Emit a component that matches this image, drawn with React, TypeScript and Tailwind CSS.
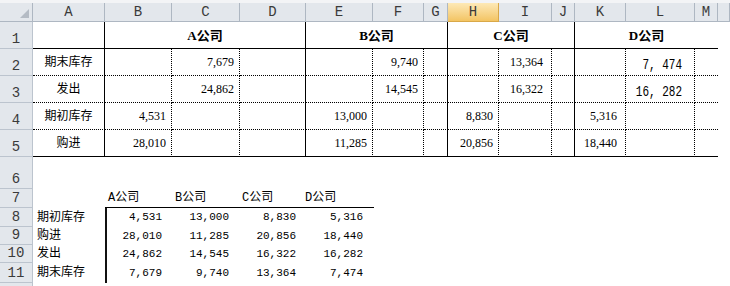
import React from 'react';

// column widths: row header, A..M, then the cut-off N
const GRID = "grid grid-cols-[33px_72px_67px_68px_66px_67px_51px_24px_51px_53px_23px_51px_69px_23px_1fr]";

const letters = ["A", "B", "C", "D", "E", "F", "G", "H", "I", "J", "K", "L", "M", ""];

// right border of each column A..M in rows 2-5
const rightBorder = [
  "border-r border-black",
  "border-r border-black [border-right-style:dotted]",
  "border-r border-black [border-right-style:dotted]",
  "border-r border-black",
  "border-r border-black [border-right-style:dotted]",
  "border-r border-black [border-right-style:dotted]",
  "border-r border-black",
  "border-r border-black [border-right-style:dotted]",
  "border-r border-black [border-right-style:dotted]",
  "border-r border-black",
  "border-r border-black [border-right-style:dotted]",
  "border-r border-black [border-right-style:dotted]",
  "",
];

const rows: { n: number; label: string; vals: Record<number, string>; big?: string }[] = [
  { n: 2, label: "期末库存", vals: { 2: "7,679", 5: "9,740", 8: "13,364" }, big: "7, 474" },
  { n: 3, label: "发出", vals: { 2: "24,862", 5: "14,545", 8: "16,322" }, big: "16, 282" },
  { n: 4, label: "期初库存", vals: { 1: "4,531", 4: "13,000", 7: "8,830", 10: "5,316" } },
  { n: 5, label: "购进", vals: { 1: "28,010", 4: "11,285", 7: "20,856", 10: "18,440" } },
];

const companies = ["A公司", "B公司", "C公司", "D公司"];

const summary = [
  { label: "期初库存", vals: ["4,531", "13,000", "8,830", "5,316"], h: "h-[19px]" },
  { label: "购进", vals: ["28,010", "11,285", "20,856", "18,440"], h: "h-[18px]" },
  { label: "发出", vals: ["24,862", "14,545", "16,322", "16,282"], h: "h-[18px]" },
  { label: "期末库存", vals: ["7,679", "9,740", "13,364", "7,474"], h: "h-[20px]" },
];

const lowerHeaders = [
  { n: "6", h: "h-[32px]" },
  { n: "7", h: "h-[19px]" },
  { n: "8", h: "h-[19px]" },
  { n: "9", h: "h-[18px]" },
  { n: "10", h: "h-[18px]" },
  { n: "11", h: "h-[20px]" },
  { n: "", h: "h-[20px]" },
];

const rowHead = "bg-[#e3e7ec] border-r border-b border-[#bcc4ce] flex items-end justify-center pb-[2px] text-[14px] leading-none text-[#3a3a3a] font-['Liberation_Mono',monospace]";
const serif = "font-['Liberation_Serif','Noto_Sans_CJK_SC',serif] text-[12px] leading-none text-black";
const cjk = "font-['Liberation_Sans','Noto_Sans_CJK_SC',sans-serif] text-[12px] leading-none text-black";

export default function App() {
  return (
    <div className="w-[730px] h-[286px] overflow-hidden bg-white">
      <div className="h-[3px] bg-[#f3f4f6]" />

      {/* 欄標題 */}
      <div className={`${GRID} h-[19px]`}>
        <div className="bg-[#e3e7ec] border-r border-b border-[#aeb7c2]">
          <svg width="33" height="18" className="block">
            <polygon points="29,6 29,15 20,15" fill="#b4bbc4" />
          </svg>
        </div>
        {letters.map((l) => (
          <div
            key={l || "n"}
            className={`${l === "H" ? "bg-linear-to-b from-[#fde9b6] to-[#f3c462] border-[#d9a848]" : "bg-[#e3e7ec] border-[#aeb7c2]"} border-r border-b flex items-center justify-center text-[14px] leading-none text-[#3a3a3a] font-['Liberation_Mono',monospace]`}
          >
            {l}
          </div>
        ))}
      </div>

      {/* 第1列：公司標題 */}
      <div className={`${GRID} h-[27px]`}>
        <div className={rowHead}>1</div>
        <div className="border-r border-b border-black" />
        {companies.map((c, i) => (
          <div
            key={c}
            className={`col-span-3 border-b border-black ${i < 3 ? "border-r" : ""} flex items-center justify-center font-['Liberation_Serif','Noto_Sans_CJK_SC',serif] text-[13px] font-bold leading-none text-black`}
          >
            {c}
          </div>
        ))}
        <div />
      </div>

      {/* 第2-5列 */}
      {rows.map((r) => (
        <div key={r.n} className={`${GRID} h-[27px]`}>
          <div className={rowHead}>{r.n}</div>
          {letters.slice(0, 13).map((_, c) => {
            const bottom = r.n === 5 ? "border-b border-black" : "border-b border-black [border-bottom-style:dotted]";
            if (c === 0) {
              return (
                <div key={c} className={`${rightBorder[c]} ${bottom} flex items-center justify-center ${cjk}`}>
                  {r.label}
                </div>
              );
            }
            if (c === 11 && r.big) {
              return (
                <div key={c} className={`${rightBorder[c]} ${bottom} flex items-end justify-end pr-[12px] pb-[2px]`}>
                  <span className="inline-block origin-bottom scale-y-[1.35] font-['Liberation_Mono',monospace] text-[11px] leading-none text-black">
                    {r.big}
                  </span>
                </div>
              );
            }
            const pad = c === 8 || c === 10 ? "pr-[8px]" : "pr-[5px]";
            return (
              <div key={c} className={`${rightBorder[c]} ${bottom} flex items-center justify-end ${pad} ${serif}`}>
                {r.vals[c] ?? ""}
              </div>
            );
          })}
          <div />
        </div>
      ))}

      {/* 第6列以下：貼上的彙總表 */}
      <div className="flex">
        <div className="w-[33px] shrink-0 flex flex-col">
          {lowerHeaders.map((h, i) => (
            <div key={i} className={`${h.h} ${rowHead}`}>
              {h.n}
            </div>
          ))}
        </div>
        <div className="flex-1 pt-[32px] flex font-['Liberation_Mono','Noto_Sans_CJK_SC',monospace] text-black leading-none">
          <div className="w-[74px] shrink-0 flex flex-col">
            <div className="h-[19px]" />
            {summary.map((s) => (
              <div key={s.label} className={`${s.h} flex items-center pl-[4px] text-[12px] border-r-2 border-[#111]`}>
                {s.label}
              </div>
            ))}
          </div>
          <div className="w-[267px] shrink-0 flex flex-col">
            <div className="h-[19px] -ml-[2px] grid grid-cols-[68px_67px_67px_67px] border-b border-black">
              {companies.map((c, i) => (
                <div key={c} className={`flex items-center text-[12px] ${i === 3 ? "-ml-[2px]" : i === 0 ? "pl-[3px]" : "pl-[2px]"}`}>
                  {c}
                </div>
              ))}
            </div>
            <div className="flex flex-col">
              {summary.map((s) => (
                <div key={s.label} className={`${s.h} grid grid-cols-[66px_67px_67px_67px]`}>
                  {s.vals.map((v, i) => (
                    <div key={i} className="flex items-center justify-end pr-[11px] text-[11px]">
                      {v}
                    </div>
                  ))}
                </div>
              ))}
            </div>
          </div>
        </div>
      </div>
    </div>
  );
}
